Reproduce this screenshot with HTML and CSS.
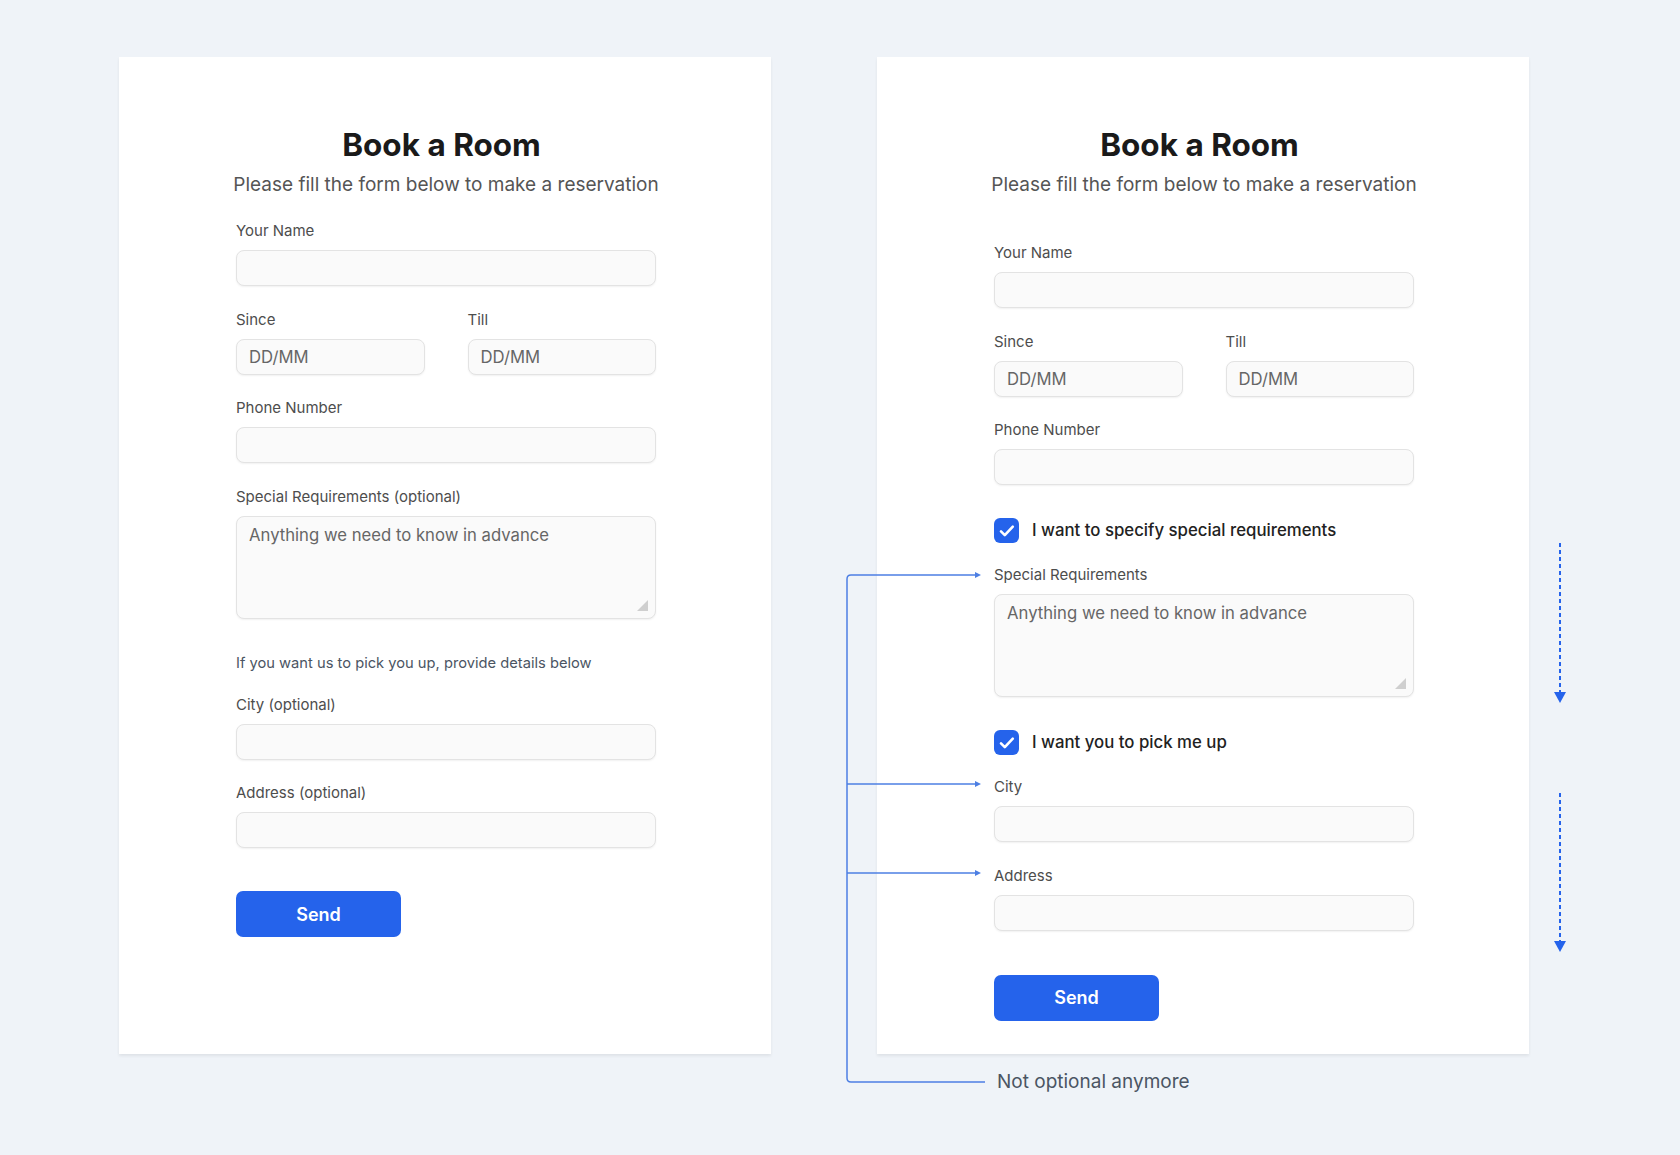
FILE: index.html
```html
<!DOCTYPE html>
<html lang="en">
<head>
  <meta charset="UTF-8">
  <title>Book a Room</title>
  <meta name="viewport" content="width=device-width, initial-scale=1.0">
  <link rel="stylesheet" href="styles.css">
</head>
<body>
  <div class="page">
    <!-- Before: everything optional -->
    <div class="card">
      <h1>Book a Room</h1>
      <p class="subtitle">Please fill the form below to make a reservation</p>

      <form class="form form-old">
        <div class="field">
          <label>Your Name</label>
          <input type="text">
        </div>
        <div class="field dates">
          <div>
            <label>Since</label>
            <input type="text" placeholder="DD/MM">
          </div>
          <div>
            <label>Till</label>
            <input type="text" placeholder="DD/MM">
          </div>
        </div>
        <div class="field">
          <label>Phone Number</label>
          <input type="text">
        </div>
        <div class="field">
          <label>Special Requirements (optional)</label>
          <div class="area">
            <textarea placeholder="Anything we need to know in advance"></textarea>
          </div>
        </div>
        <p class="hint">If you want us to pick you up, provide details below</p>
        <div class="field">
          <label>City (optional)</label>
          <input type="text">
        </div>
        <div class="field">
          <label>Address (optional)</label>
          <input type="text">
        </div>
        <button type="button" class="send">Send</button>
      </form>
    </div>

    <!-- After: checkboxes reveal required fields -->
    <div class="card">
      <h1>Book a Room</h1>
      <p class="subtitle">Please fill the form below to make a reservation</p>

      <form class="form form-new">
        <div class="field">
          <label>Your Name</label>
          <input type="text">
        </div>
        <div class="field dates">
          <div>
            <label>Since</label>
            <input type="text" placeholder="DD/MM">
          </div>
          <div>
            <label>Till</label>
            <input type="text" placeholder="DD/MM">
          </div>
        </div>
        <div class="field">
          <label>Phone Number</label>
          <input type="text">
        </div>
        <div class="check">
          <span class="box">
            <svg width="20" height="20" viewBox="0 0 20 20"><path d="M4 10.4l3.8 3.8 8-8.6" fill="none" stroke="#fff" stroke-width="2.6" stroke-linecap="round" stroke-linejoin="round"/></svg>
          </span>
          <span>I want to specify special requirements</span>
        </div>
        <div class="field">
          <label>Special Requirements</label>
          <div class="area">
            <textarea placeholder="Anything we need to know in advance"></textarea>
          </div>
        </div>
        <div class="check">
          <span class="box">
            <svg width="20" height="20" viewBox="0 0 20 20"><path d="M4 10.4l3.8 3.8 8-8.6" fill="none" stroke="#fff" stroke-width="2.6" stroke-linecap="round" stroke-linejoin="round"/></svg>
          </span>
          <span>I want you to pick me up</span>
        </div>
        <div class="field">
          <label>City</label>
          <input type="text">
        </div>
        <div class="field">
          <label>Address</label>
          <input type="text">
        </div>
        <button type="button" class="send">Send</button>
      </form>
    </div>
  </div>

  <!-- Annotation overlay -->
  <svg class="notes" width="1680" height="1155" viewBox="0 0 1680 1155">
    <g fill="none" stroke="#4d7fe3" stroke-width="1.5">
      <path d="M976 575 H851 Q847 575 847 579 V1078 Q847 1082 851 1082 H985"/>
      <path d="M847 784 H976"/>
      <path d="M847 873 H976"/>
    </g>
    <g fill="#4d7fe3">
      <polygon points="975,572 981,575 975,578"/>
      <polygon points="975,781 981,784 975,787"/>
      <polygon points="975,870 981,873 975,876"/>
    </g>
    <g stroke="#2563eb" stroke-width="2" stroke-dasharray="4 3">
      <path d="M1560 543 V692"/>
      <path d="M1560 793 V941"/>
    </g>
    <g fill="#2563eb">
      <polygon points="1554,692 1566,692 1560,703"/>
      <polygon points="1554,941 1566,941 1560,952"/>
    </g>
  </svg>
  <span class="note-text">Not optional anymore</span>
</body>
</html>
```

FILE: styles.css
```css
body {
  margin: 0;
  background: #eff3f8;
  font-family: Inter, 'Noto Sans', sans-serif;
  color: #1a1a1a;
  position: relative;
  min-height: 1155px;
}
.page {
  display: flex;
  align-items: flex-start;
  gap: 106px;
  padding: 57px 0 0 119px;
}
.card {
  box-sizing: border-box;
  width: 652px;
  height: 997px;
  background: #fff;
  box-shadow: 0 2px 3px rgba(0,0,0,0.07);
  padding: 69px 115px 0 117px;
}
h1 {
  margin: 0;
  padding-right: 9px;
  font-size: 31.5px;
  line-height: 38px;
  font-weight: 700;
  text-align: center;
  color: #1a1a1a;
}
.subtitle {
  margin: 9px -80px 0;
  font-size: 19px;
  line-height: 24px;
  color: #555;
  text-align: center;
  white-space: nowrap;
}
.form {
  margin-top: 25px;
}
.form-new {
  margin-top: 47px;
}
label {
  display: block;
  font-size: 15px;
  line-height: 18px;
  color: #4d4d4d;
  margin-bottom: 10px;
}
.field {
  margin-bottom: 24.5px;
}
input, textarea {
  display: block;
  box-sizing: border-box;
  width: 100%;
  height: 36px;
  padding: 0 12px;
  border: 1px solid #e3e3e3;
  border-radius: 8px;
  background: #fafafa;
  box-shadow: 0 1px 2px rgba(0,0,0,0.06);
  font-family: inherit;
  font-size: 16.7px;
  color: #333;
  outline: none;
}
input::placeholder, textarea::placeholder {
  color: #666;
}
.dates {
  display: grid;
  grid-template-columns: 1fr 1fr;
  column-gap: 43px;
}
.area {
  position: relative;
}
textarea {
  height: 103px;
  padding: 8px 12px;
  line-height: 20px;
  resize: none;
}
/* resize grip */
.area::after {
  content: "";
  position: absolute;
  right: 8px;
  bottom: 8px;
  width: 0;
  height: 0;
  border-left: 11px solid transparent;
  border-bottom: 11px solid #cfcfcf;
}
.hint {
  margin: 35px 0 24px;
  font-size: 14.7px;
  line-height: 18px;
  color: #4b5563;
}
.check {
  display: flex;
  align-items: center;
  gap: 13px;
  margin: 33px 0 23px;
  font-size: 16.8px;
  font-weight: 500;
  line-height: 25px;
  color: #222;
}
.box {
  display: flex;
  align-items: center;
  justify-content: center;
  width: 25px;
  height: 25px;
  border-radius: 6px;
  background: #2563eb;
}
.send {
  display: block;
  width: 165px;
  height: 46px;
  margin-top: 43px;
  border: none;
  border-radius: 7px;
  background: #2563eb;
  color: #fff;
  font-family: inherit;
  font-size: 18px;
  font-weight: 600;
  cursor: pointer;
}
.form-new .send {
  margin-top: 44px;
}
.field:last-of-type {
  margin-bottom: 0;
}
/* annotation overlay */
.notes {
  position: absolute;
  top: 0;
  left: 0;
  pointer-events: none;
}
.note-text {
  position: absolute;
  left: 997px;
  top: 1070px;
  font-size: 19px;
  line-height: 24px;
  color: #4b5563;
}
```
